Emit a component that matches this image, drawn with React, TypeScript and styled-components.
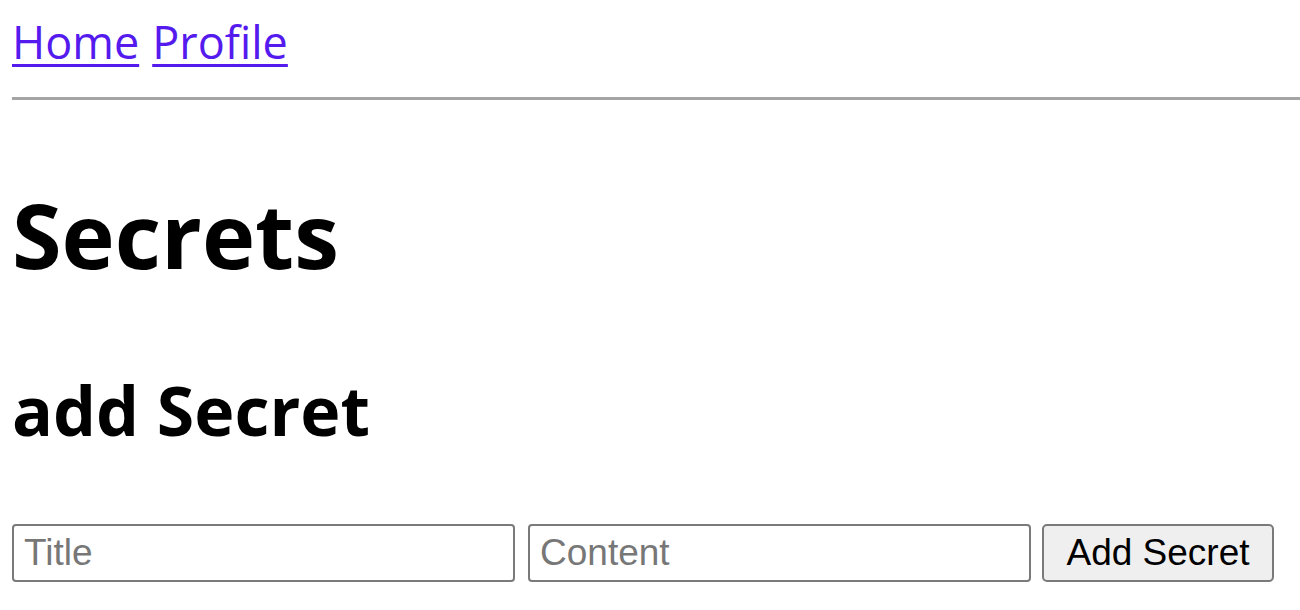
import React from "react"
import styled, {createGlobalStyle} from "styled-components";

const GlobalStyle = createGlobalStyle`
    html, body {
        margin: 0;
        padding: 0;
        background: #ffffff;
    }
    body {
        font-family: "Open Sans", "Noto Sans", sans-serif;
    }
`

const PageWrapper = styled.div`
    display: flex;
    flex-direction: column;
    padding: 0 0 0 12px;
    width: 1300px;
    box-sizing: border-box;
`

const NavWrapper = styled.nav`
    display: flex;
    flex-direction: row;
    gap: 13px;
    padding-top: 11px;
    font-size: 45px;
    line-height: 61px;
    height: 61px;
`

const NavLinkWrapper = styled.a`
    color: #551aee;
    text-decoration: underline;
    text-decoration-thickness: 3px;
    text-underline-offset: 5px;
    cursor: pointer;
`

const Divider = styled.hr`
    margin: 25px 0 0 0;
    border: none;
    border-top: 3px solid #a4a4a4;
    height: 0;
`

const Title = styled.h1`
    margin: 89px 0 0 0;
    font-size: 90px;
    line-height: 90px;
    font-weight: 700;
    color: #000;
`

const SubTitle = styled.h2`
    margin: 97px 0 0 0;
    font-size: 68px;
    line-height: 68px;
    font-weight: 700;
    color: #000;
`

const FormRow = styled.div`
    display: flex;
    flex-direction: row;
    align-items: center;
    gap: 13px;
    margin-top: 80px;
`

const TextInput = styled.input`
    box-sizing: border-box;
    width: 503px;
    height: 58px;
    border: 2px solid #7a7a7a;
    border-radius: 4px;
    padding: 0 10px;
    font-family: "Liberation Sans", Arial, sans-serif;
    font-size: 37px;
    color: #000;
    background: #fff;
    &::placeholder {
        color: #777;
    }
`

const SubmitButton = styled.button`
    box-sizing: border-box;
    width: 232px;
    height: 58px;
    margin-left: -2px;
    border: 2px solid #7a7a7a;
    border-radius: 5px;
    background-color: #efefef;
    font-family: "Liberation Sans", Arial, sans-serif;
    font-size: 37px;
    color: #000;
    padding: 0;
`

const App: React.FC = () => {
    return (
        <PageWrapper>
            <GlobalStyle/>
            <NavWrapper>
                <NavLinkWrapper href="#">Home</NavLinkWrapper>
                <NavLinkWrapper href="#">Profile</NavLinkWrapper>
            </NavWrapper>
            <Divider/>
            <Title>Secrets</Title>
            <SubTitle>add Secret</SubTitle>
            <FormRow>
                <TextInput placeholder="Title"/>
                <TextInput placeholder="Content"/>
                <SubmitButton>Add Secret</SubmitButton>
            </FormRow>
        </PageWrapper>
    )
}

export default App
